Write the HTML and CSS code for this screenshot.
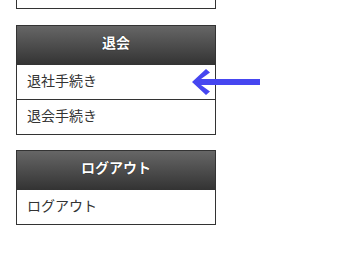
FILE: index.html
```html
<html>
<head>
    <title>Menu</title>
    <link rel="stylesheet" href="styles.css">
</head>
<body>
    <div class="side">
        <div class="menu first">
            <div class="menu-item stub"></div>
        </div>
        <div class="menu">
            <div class="menu-head">退会</div>
            <div class="menu-item current">退社手続き
                <svg class="arrow" width="70" height="30" viewBox="0 0 70 30">
                    <path d="M1 14 L15 1 L19 4.5 L10 11 L69 11 L69 17 L10 17 L19 23.5 L15 27 Z" fill="#4646f0"/>
                </svg>
            </div>
            <div class="menu-item">退会手続き</div>
        </div>
        <div class="menu">
            <div class="menu-head">ログアウト</div>
            <div class="menu-item">ログアウト</div>
        </div>
    </div>
</body>
</html>
```

FILE: styles.css
```css
body {
    margin: 0;
    background: #fff;
    font-family: "Noto Sans CJK JP", "Noto Sans", sans-serif;
    font-size: 14px;
    color: #333;
}
.side {
    padding-left: 16px;
}
.menu {
    width: 198px;
    border: 1px solid #333;
    margin-bottom: 15px;
}
.menu.first {
    border-top: none;
    margin-bottom: 16px;
}
.menu-head {
    height: 39px;
    line-height: 33px;
    text-align: center;
    color: #fff;
    font-weight: bold;
    background: linear-gradient(#666, #333);
    text-shadow: 0 0 1px #000;
}
.menu-item {
    height: 34px;
    line-height: 30px;
    padding-left: 10px;
    background: #fff;
}
.menu-item.stub {
    height: 8px;
}
.menu-item + .menu-item {
    border-top: 1px solid #333;
}
.current {
    position: relative;
}
.arrow {
    position: absolute;
    left: 174px;
    top: 3px;
}
```
